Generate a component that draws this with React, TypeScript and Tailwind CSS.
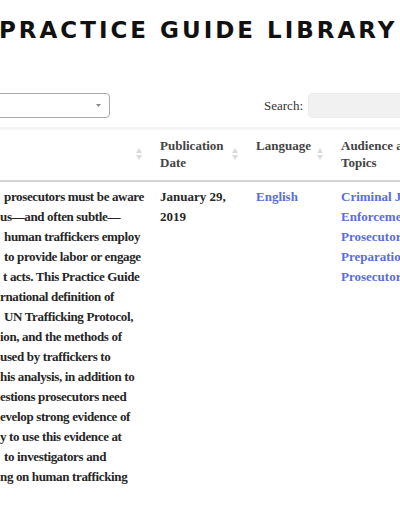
const serif = { fontFamily: '"Liberation Serif", "DejaVu Serif", serif' }

const summaryLines = [
  { text: 'prosecutors must be aware', pad: 'pl-[4px]' },
  { text: 'us—and often subtle—', pad: 'pl-0' },
  { text: 'human traffickers employ', pad: 'pl-[4px]' },
  { text: 'to provide labor or engage', pad: 'pl-[4px]' },
  { text: 't acts. This Practice Guide', pad: 'pl-[3px]' },
  { text: 'rnational definition of', pad: 'pl-0' },
  { text: 'UN Trafficking Protocol,', pad: 'pl-[4px]' },
  { text: 'ion, and the methods of', pad: 'pl-0' },
  { text: 'used by traffickers to', pad: 'pl-0' },
  { text: 'his analysis, in addition to', pad: 'pl-0' },
  { text: 'estions prosecutors need', pad: 'pl-0' },
  { text: 'evelop strong evidence of', pad: 'pl-0' },
  { text: 'y to use this evidence at', pad: 'pl-0' },
  { text: 'to investigators and', pad: 'pl-[4px]' },
  { text: 'ng on human trafficking', pad: 'pl-0' },
]

const topics = ['Criminal Justice', 'Enforcement', 'Prosecutors', 'Preparation', 'Prosecutors']

function SortIcon() {
  return (
    <svg width="6" height="12" viewBox="0 0 6 12" className="shrink-0 self-center">
      <path d="M3 0 L6 5 L0 5 Z" fill="#dcdcdc" />
      <path d="M0 7 L6 7 L3 12 Z" fill="#dcdcdc" />
    </svg>
  )
}

function HeaderCell({ label, first }: { label: string; first?: boolean }) {
  return (
    <div className={`flex pr-[8px] pt-[7px] pb-[9px] ${first ? 'pl-0' : 'pl-[10px]'}`}>
      <div className="flex-1 text-[13px] leading-[17px] font-bold text-[#444]">{label}</div>
      <SortIcon />
    </div>
  )
}

export default function App() {
  return (
    <div className="w-[400px] h-[516px] overflow-hidden bg-white" style={serif}>
      <h1
        className="mt-[18px] -ml-[1px] whitespace-nowrap text-[23px] leading-[24px] font-bold tracking-[3px] text-[#111]"
        style={{ fontFamily: '"DejaVu Sans", "Liberation Sans", sans-serif' }}
      >
        PRACTICE GUIDE LIBRARY
      </h1>

      {/* filter + search */}
      <div className="mt-[51px] -ml-[20px] w-[440px] flex items-center">
        <div className="w-[130px] h-[25px] border border-[#aaa] rounded-[4px] bg-white flex items-center pr-[8px]">
          <span className="-ml-[1px] text-[13px] text-[#888]">s</span>
          <span className="flex-1" />
          <svg width="5" height="3" viewBox="0 0 5 3">
            <path d="M0 0 L5 0 L2.5 3 Z" fill="#888" />
          </svg>
        </div>
        <div className="ml-auto flex items-center gap-[5px]">
          <span className="text-[13px] text-[#333]">Search:</span>
          <div className="w-[112px] h-[25px] rounded-[4px] bg-[#f1f1f1] border border-[#ececec]" />
        </div>
      </div>

      <div className="mt-[9px] h-[3px] bg-[#f4f4f4]" />

      {/* table */}
      <div className="grid grid-cols-[150px_96px_85px_1fr]">
        <div className="contents">
          <HeaderCell label="" first />
          <HeaderCell label="Publication Date" />
          <HeaderCell label="Language" />
          <div className="pl-[10px] pt-[7px] pb-[9px] text-[13px] leading-[17px] font-bold text-[#444] whitespace-nowrap overflow-hidden">
            Audience and
            <br />
            Topics
          </div>
        </div>
        <div className="col-span-4 h-[2px] bg-[#d4d4d4]" />

        <div className="pt-[5px] overflow-hidden text-[13px] leading-[20px] font-bold tracking-[-0.35px] text-[#262626]">
          {summaryLines.map((l, i) => (
            <div key={i} className={`whitespace-nowrap ${l.pad}`}>
              {l.text}
            </div>
          ))}
        </div>
        <div className="pl-[10px] pr-[10px] pt-[5px] text-[13px] leading-[20px] font-bold text-[#262626]">
          January 29, 2019
        </div>
        <div className="pl-[10px] pt-[5px] text-[13px] leading-[20px] font-bold text-[#5a6ddc]">English</div>
        <div className="pl-[10px] pt-[5px] text-[13px] leading-[20px] font-bold text-[#5a6ddc] overflow-hidden">
          {topics.map((t, i) => (
            <div key={i} className="whitespace-nowrap">
              {t}
            </div>
          ))}
        </div>
      </div>
    </div>
  )
}
